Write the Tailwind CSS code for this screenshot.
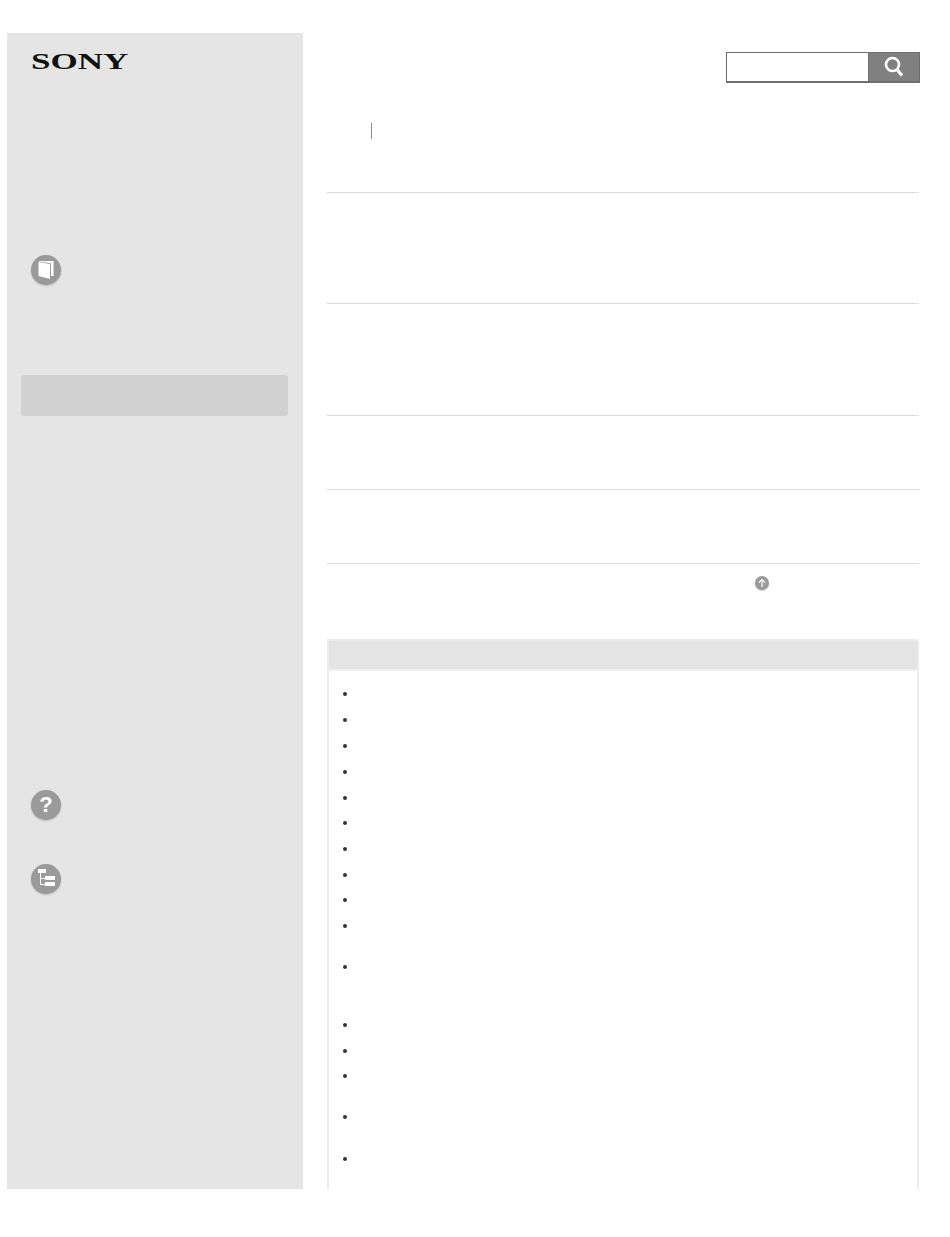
<!DOCTYPE html>
<html lang="en">
<head>
  <meta charset="UTF-8" />
  <title>Help Guide</title>
  <script src="https://cdn.jsdelivr.net/npm/@tailwindcss/browser@4"></script>
</head>
<body class="bg-white h-[1237px] overflow-hidden">
  <div class="flex items-start pt-[33px] pl-[7px]">

    <!-- sidebar -->
    <aside class="w-[296px] h-[1156px] bg-[#e5e5e5] flex flex-col shrink-0">
      <div class="h-[222px] pl-[24px] pt-[13px]">
        <span class="block w-max origin-left scale-x-[1.46] font-['Liberation_Serif',serif] font-bold text-[24px] leading-[30px] text-[#111]">SONY</span>
      </div>
      <div class="pl-[24px] h-[120px]">
        <div class="w-[30px] h-[30px] rounded-full bg-[#9a9a9a] shadow-[0_1px_2px_rgba(0,0,0,0.2)]">
          <svg width="30" height="30" viewBox="0 0 30 30" fill="#fff">
            <path d="M7.500 7L19 9v15L7.500 21z"/>
            <path d="M8 6h14.500v15H20V8.300L10 6.800H8z"/>
          </svg>
        </div>
      </div>
      <div class="ml-[14px] w-[267px] h-[41px] bg-[#d1d1d1] rounded-[3px]"></div>
      <div class="pl-[24px] pt-[374px]">
        <div class="w-[30px] h-[30px] rounded-full bg-[#9a9a9a] shadow-[0_1px_2px_rgba(0,0,0,0.2)] flex items-center justify-center">
          <span class="font-['Liberation_Sans',sans-serif] font-bold text-[22px] leading-none text-white">?</span>
        </div>
      </div>
      <div class="pl-[24px] pt-[44px]">
        <div class="w-[30px] h-[30px] rounded-full bg-[#9a9a9a] shadow-[0_1px_2px_rgba(0,0,0,0.2)]">
          <svg width="30" height="30" viewBox="0 0 30 30" fill="#fff">
            <path d="M7 5h8v4H7z"/>
            <path d="M9 9h1v12H9z"/>
            <path d="M9 14h5v1H9zM9 20h5v1H9z"/>
            <path d="M14 12h10v4H14zM14 18h10v4H14z"/>
          </svg>
        </div>
      </div>
    </aside>

    <!-- main column -->
    <main class="ml-[24px] w-[592px] h-[1156px] flex flex-col">
      <div class="h-[90px] relative">
        <div class="absolute -right-px top-[19px] flex w-[194px] h-[31px] border border-[#6e6e6e] border-b-2">
          <div class="flex-1 bg-white"></div>
          <div class="w-[51px] bg-[#808080] border-l border-[#6e6e6e] flex items-center justify-center">
            <svg width="20" height="22" viewBox="0 0 20 22" fill="none" stroke="#fff">
              <circle cx="8.500" cy="8.500" r="6.500" stroke-width="2.600"/>
              <path d="M13 13.500l5 6" stroke-width="3.200"/>
            </svg>
          </div>
        </div>
        <div class="absolute left-[44px] top-[90px] w-px h-[16px] bg-[#8a8a8a]"></div>
      </div>

      <div class="h-[69px]"></div>
      <div class="h-[111px] border-t border-[#dcdcdc]"></div>
      <div class="h-[112px] border-t border-[#dcdcdc]"></div>
      <div class="h-[74px] border-t border-[#dcdcdc]"></div>
      <div class="h-[74px] border-t border-[#dcdcdc]"></div>
      <div class="h-[76px] border-t border-[#dcdcdc] pl-[428px] pt-[12px]">
        <div class="w-[14px] h-[14px] rounded-full bg-[#9a9a9a] shadow-[0_1px_1px_rgba(0,0,0,0.2)] flex items-center justify-center">
          <svg width="10" height="10" viewBox="0 0 10 10" fill="none" stroke="#fff" stroke-width="1.200">
            <path d="M5 9V1.500M1.800 4.700L5 1.500l3.200 3.200"/>
          </svg>
        </div>
      </div>

      <!-- list box, runs off the bottom of the page -->
      <section class="flex-1 min-h-0 overflow-hidden border-x-2 border-t-2 border-[#ececec]">
        <div class="h-[28px] bg-[#e4e4e4] border-b-2 border-[#efefef] box-content"></div>
        <ul class="pt-[13px] pl-[14px] flex flex-col">
          <li class="h-[26px] pt-[8px]"><span class="block w-[4px] h-[4px] rounded-full bg-[#333]"></span></li>
          <li class="h-[26px] pt-[8px]"><span class="block w-[4px] h-[4px] rounded-full bg-[#333]"></span></li>
          <li class="h-[26px] pt-[8px]"><span class="block w-[4px] h-[4px] rounded-full bg-[#333]"></span></li>
          <li class="h-[26px] pt-[8px]"><span class="block w-[4px] h-[4px] rounded-full bg-[#333]"></span></li>
          <li class="h-[25px] pt-[8px]"><span class="block w-[4px] h-[4px] rounded-full bg-[#333]"></span></li>
          <li class="h-[26px] pt-[8px]"><span class="block w-[4px] h-[4px] rounded-full bg-[#333]"></span></li>
          <li class="h-[26px] pt-[8px]"><span class="block w-[4px] h-[4px] rounded-full bg-[#333]"></span></li>
          <li class="h-[25px] pt-[8px]"><span class="block w-[4px] h-[4px] rounded-full bg-[#333]"></span></li>
          <li class="h-[26px] pt-[8px]"><span class="block w-[4px] h-[4px] rounded-full bg-[#333]"></span></li>
          <li class="h-[41px] pt-[8px]"><span class="block w-[4px] h-[4px] rounded-full bg-[#333]"></span></li>
          <li class="h-[58px] pt-[8px]"><span class="block w-[4px] h-[4px] rounded-full bg-[#333]"></span></li>
          <li class="h-[26px] pt-[8px]"><span class="block w-[4px] h-[4px] rounded-full bg-[#333]"></span></li>
          <li class="h-[25px] pt-[8px]"><span class="block w-[4px] h-[4px] rounded-full bg-[#333]"></span></li>
          <li class="h-[41px] pt-[8px]"><span class="block w-[4px] h-[4px] rounded-full bg-[#333]"></span></li>
          <li class="h-[42px] pt-[8px]"><span class="block w-[4px] h-[4px] rounded-full bg-[#333]"></span></li>
          <li class="h-[26px] pt-[8px]"><span class="block w-[4px] h-[4px] rounded-full bg-[#333]"></span></li>
        </ul>
      </section>
    </main>
  </div>
</body>
</html>
